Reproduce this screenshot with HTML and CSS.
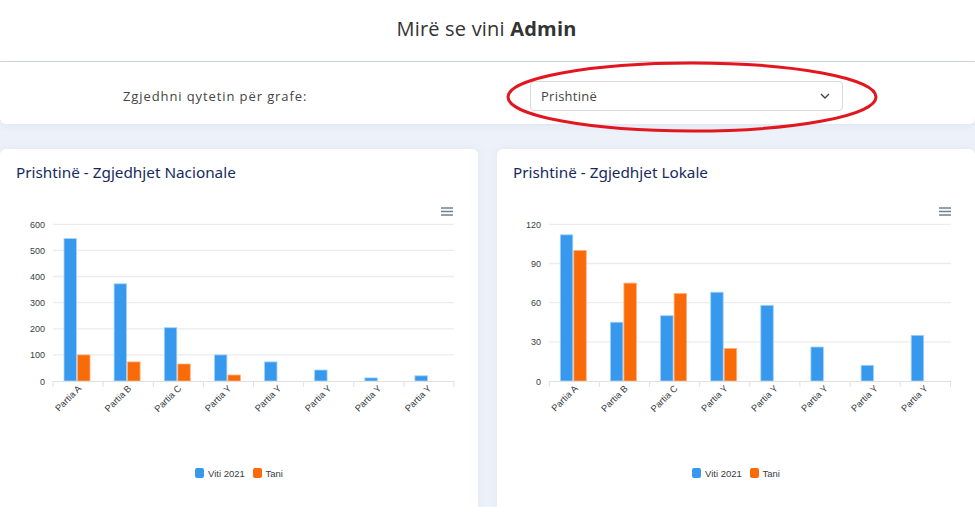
FILE: index.html
```html
<!DOCTYPE html>
<html lang="sq">
<head>
<meta charset="utf-8">
<title>Paneli</title>
<link rel="stylesheet" href="styles.css">
</head>
<body>
<header class="topbar">
  <h1 class="welcome">Mirë se vini <b>Admin</b></h1>
</header>
<div class="dashboard">
  <section class="filter">
    <label class="filter-label" for="city">Zgjedhni qytetin për grafe:</label>
    <div class="select">
      <span class="select-value">Prishtinë</span>
      <svg class="chevron" width="10" height="6" viewBox="0 0 10 6"><path d="M1 1l4 4 4-4" fill="none" stroke="#444" stroke-width="1.4"/></svg>
    </div>
    <svg class="highlight" width="380" height="76" viewBox="0 0 380 76"><ellipse cx="187" cy="36" rx="184" ry="34" fill="none" stroke="#e3161f" stroke-width="3"/></svg>
  </section>

  <main class="charts">
    <article class="card">
      <h2 class="card-title">Prishtinë - Zgjedhjet Nacionale</h2>
      <svg class="chart" width="478" height="318" viewBox="0 0 478 318">
        <g class="menu"><line x1="441" y1="19" x2="453" y2="19"/><line x1="441" y1="22.5" x2="453" y2="22.5"/><line x1="441" y1="26" x2="453" y2="26"/></g>
        <g class="grid">
          <line x1="53" y1="35.3" x2="454" y2="35.3"/><line x1="53" y1="61.4" x2="454" y2="61.4"/><line x1="53" y1="87.5" x2="454" y2="87.5"/><line x1="53" y1="113.6" x2="454" y2="113.6"/><line x1="53" y1="139.8" x2="454" y2="139.8"/><line x1="53" y1="165.9" x2="454" y2="165.9"/>
        </g>
        <g class="ylabels">
          <text x="45" y="38.8">600</text><text x="45" y="64.9">500</text><text x="45" y="91">400</text><text x="45" y="117.1">300</text><text x="45" y="143.3">200</text><text x="45" y="169.4">100</text><text x="45" y="195.5">0</text>
        </g>
        <g class="bars-a">
          <rect x="64" y="49.6" width="12.5" height="142.4"/><rect x="114.1" y="94.8" width="12.5" height="97.2"/><rect x="164.3" y="138.7" width="12.5" height="53.3"/><rect x="214.4" y="165.9" width="12.5" height="26.1"/><rect x="264.5" y="172.9" width="12.5" height="19.1"/><rect x="314.6" y="181" width="12.5" height="11"/><rect x="364.8" y="188.9" width="12.5" height="3.1"/><rect x="414.9" y="186.8" width="12.5" height="5.2"/>
        </g>
        <g class="bars-b">
          <rect x="77.5" y="165.9" width="12.5" height="26.1"/><rect x="127.6" y="172.9" width="12.5" height="19.1"/><rect x="177.8" y="175" width="12.5" height="17"/><rect x="227.9" y="186" width="12.5" height="6"/>
        </g>
        <g class="axis">
          <line x1="53" y1="192.5" x2="454" y2="192.5"/>
          <line x1="53" y1="192" x2="53" y2="198"/><line x1="103.1" y1="192" x2="103.1" y2="198"/><line x1="153.3" y1="192" x2="153.3" y2="198"/><line x1="203.4" y1="192" x2="203.4" y2="198"/><line x1="253.5" y1="192" x2="253.5" y2="198"/><line x1="303.6" y1="192" x2="303.6" y2="198"/><line x1="353.8" y1="192" x2="353.8" y2="198"/><line x1="403.9" y1="192" x2="403.9" y2="198"/><line x1="454" y1="192" x2="454" y2="198"/>
        </g>
        <g class="xlabels">
          <text x="82" y="200" transform="rotate(-45 82 200)">Partia A</text>
          <text x="132" y="200" transform="rotate(-45 132 200)">Partia B</text>
          <text x="182" y="200" transform="rotate(-45 182 200)">Partia C</text>
          <text x="232" y="200" transform="rotate(-45 232 200)">Partia Y</text>
          <text x="282" y="200" transform="rotate(-45 282 200)">Partia Y</text>
          <text x="332" y="200" transform="rotate(-45 332 200)">Partia Y</text>
          <text x="382" y="200" transform="rotate(-45 382 200)">Partia Y</text>
          <text x="432" y="200" transform="rotate(-45 432 200)">Partia Y</text>
        </g>
        <g class="legend">
          <rect class="key-a" x="195" y="279" width="9" height="10" rx="2"/><text x="208" y="288">Viti 2021</text>
          <rect class="key-b" x="253" y="279" width="9" height="10" rx="2"/><text x="265.5" y="288">Tani</text>
        </g>
      </svg>
    </article>

    <article class="card">
      <h2 class="card-title">Prishtinë - Zgjedhjet Lokale</h2>
      <svg class="chart" width="478" height="318" viewBox="0 0 478 318">
        <g class="menu"><line x1="442" y1="19" x2="454" y2="19"/><line x1="442" y1="22.5" x2="454" y2="22.5"/><line x1="442" y1="26" x2="454" y2="26"/></g>
        <g class="grid">
          <line x1="52" y1="35.3" x2="454" y2="35.3"/><line x1="52" y1="74.5" x2="454" y2="74.5"/><line x1="52" y1="113.6" x2="454" y2="113.6"/><line x1="52" y1="152.8" x2="454" y2="152.8"/>
        </g>
        <g class="ylabels">
          <text x="44" y="38.8">120</text><text x="44" y="78">90</text><text x="44" y="117.1">60</text><text x="44" y="156.3">30</text><text x="44" y="195.5">0</text>
        </g>
        <g class="bars-a">
          <rect x="63.3" y="45.8" width="12.5" height="146.2"/><rect x="113.4" y="133.2" width="12.5" height="58.8"/><rect x="163.6" y="126.7" width="12.5" height="65.3"/><rect x="213.7" y="103.2" width="12.5" height="88.8"/><rect x="263.8" y="116.3" width="12.5" height="75.7"/><rect x="313.9" y="158" width="12.5" height="34"/><rect x="364.1" y="176.3" width="12.5" height="15.7"/><rect x="414.2" y="146.3" width="12.5" height="45.7"/>
        </g>
        <g class="bars-b">
          <rect x="76.8" y="61.4" width="12.5" height="130.6"/><rect x="126.9" y="94.1" width="12.5" height="97.9"/><rect x="177.1" y="104.5" width="12.5" height="87.5"/><rect x="227.2" y="159.4" width="12.5" height="32.6"/>
        </g>
        <g class="axis">
          <line x1="52" y1="192.5" x2="454" y2="192.5"/>
          <line x1="52.3" y1="192" x2="52.3" y2="198"/><line x1="102.4" y1="192" x2="102.4" y2="198"/><line x1="152.6" y1="192" x2="152.6" y2="198"/><line x1="202.7" y1="192" x2="202.7" y2="198"/><line x1="252.8" y1="192" x2="252.8" y2="198"/><line x1="302.9" y1="192" x2="302.9" y2="198"/><line x1="353.1" y1="192" x2="353.1" y2="198"/><line x1="403.2" y1="192" x2="403.2" y2="198"/><line x1="453.5" y1="192" x2="453.5" y2="198"/>
        </g>
        <g class="xlabels">
          <text x="81.3" y="200" transform="rotate(-45 81.3 200)">Partia A</text>
          <text x="131.3" y="200" transform="rotate(-45 131.3 200)">Partia B</text>
          <text x="181.3" y="200" transform="rotate(-45 181.3 200)">Partia C</text>
          <text x="231.3" y="200" transform="rotate(-45 231.3 200)">Partia Y</text>
          <text x="281.3" y="200" transform="rotate(-45 281.3 200)">Partia Y</text>
          <text x="331.3" y="200" transform="rotate(-45 331.3 200)">Partia Y</text>
          <text x="381.3" y="200" transform="rotate(-45 381.3 200)">Partia Y</text>
          <text x="431.3" y="200" transform="rotate(-45 431.3 200)">Partia Y</text>
        </g>
        <g class="legend">
          <rect class="key-a" x="195" y="279" width="9" height="10" rx="2"/><text x="208" y="288">Viti 2021</text>
          <rect class="key-b" x="253" y="279" width="9" height="10" rx="2"/><text x="265.5" y="288">Tani</text>
        </g>
      </svg>
    </article>
  </main>
</div>
</body>
</html>
```
FILE: styles.css
```css
* { box-sizing: border-box; }
html, body { margin: 0; padding: 0; background: #fff; }
body { font-family: "Open Sans", "Noto Sans", sans-serif; color: #333; }

.topbar {
  height: 62px;
  border-bottom: 1px solid #d4d4d4;
  display: flex;
  align-items: center;
  justify-content: center;
}
.welcome {
  margin: 0;
  font-size: 20px;
  font-weight: 400;
  color: #333;
  letter-spacing: 0.2px;
  padding: 0 2px 4px 0;
}
.welcome b { font-weight: 700; }

.dashboard {
  background: #edf1f9;
  height: 445px;
}

.filter {
  position: relative;
  height: 62px;
  background: #fff;
  border-radius: 0 0 6px 6px;
  box-shadow: 0 2px 6px rgba(150, 165, 200, 0.15);
  display: flex;
  align-items: center;
  padding: 6px 132px 0 123px;
}
.filter-label {
  flex: 1;
  font-size: 13px;
  letter-spacing: 0.9px;
  color: #444;
  font-weight: 400;
}
.select {
  width: 313px;
  height: 30px;
  border: 1px solid #dadada;
  border-radius: 4px;
  display: flex;
  align-items: center;
  justify-content: space-between;
  padding: 0 12px 0 10px;
  font-size: 13px;
  letter-spacing: 0.25px;
  color: #444;
}
.chevron { display: block; }
.highlight {
  position: absolute;
  left: 505px;
  top: -1px;
}

.charts {
  display: grid;
  grid-template-columns: 478px 478px;
  column-gap: 19px;
  padding-top: 25px;
}
.card {
  background: #fff;
  border-radius: 6px 6px 0 0;
  height: 358px;
  box-shadow: 0 0 8px rgba(150, 165, 200, 0.12);
}
.card-title {
  margin: 0;
  height: 40px;
  padding: 13px 16px 0;
  font-family: "Noto Sans", sans-serif;
  font-size: 15.3px;
  font-weight: 400;
  color: #172a5e;
}
.chart { display: block; font-family: "Liberation Sans", Arial, sans-serif; }

.menu line { stroke: #6e8192; stroke-width: 1.5; }
.grid line { stroke: #ececec; stroke-width: 1.3; }
.axis line { stroke: #e0e0e0; stroke-width: 1; }
.ylabels text { font-size: 9px; fill: #373d3f; text-anchor: end; }
.xlabels text { font-size: 9.3px; fill: #373d3f; text-anchor: end; }
.bars-a rect { fill: #3699ee; stroke: #a9d2f7; stroke-width: 0.8; }
.bars-b rect { fill: #f96b09; stroke: #fcb27f; stroke-width: 0.8; }
.legend text { font-size: 9.5px; fill: #373d3f; }
.key-a { fill: #3699ee; }
.key-b { fill: #f96b09; }
```
